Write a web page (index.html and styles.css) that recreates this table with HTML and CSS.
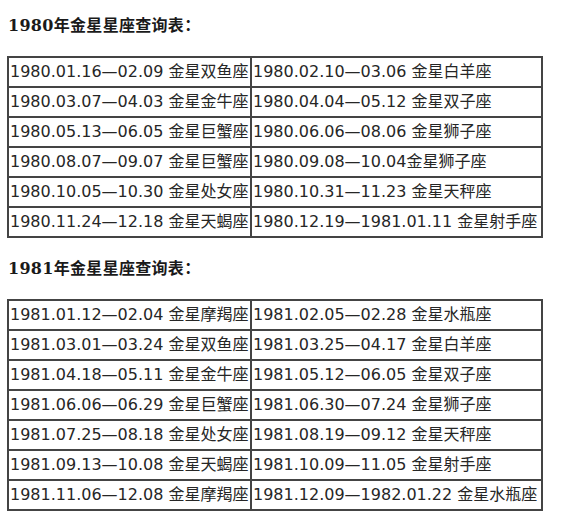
FILE: index.html
```html
<!DOCTYPE html>
<html lang="zh-CN">
<head>
<meta charset="utf-8">
<title>金星星座查询表</title>
<link rel="stylesheet" href="styles.css">
</head>
<body>
<h2 class="title">1980年金星星座查询表：</h2>
<table class="venus">
<colgroup><col class="c1"><col class="c2"></colgroup>
<tr><td>1980.01.16—02.09 金星双鱼座</td><td>1980.02.10—03.06 金星白羊座</td></tr>
<tr><td>1980.03.07—04.03 金星金牛座</td><td>1980.04.04—05.12 金星双子座</td></tr>
<tr><td>1980.05.13—06.05 金星巨蟹座</td><td>1980.06.06—08.06 金星狮子座</td></tr>
<tr><td>1980.08.07—09.07 金星巨蟹座</td><td>1980.09.08—10.04金星狮子座</td></tr>
<tr><td>1980.10.05—10.30 金星处女座</td><td>1980.10.31—11.23 金星天秤座</td></tr>
<tr><td>1980.11.24—12.18 金星天蝎座</td><td>1980.12.19—1981.01.11 金星射手座</td></tr>
</table>
<h2 class="title">1981年金星星座查询表：</h2>
<table class="venus">
<colgroup><col class="c1"><col class="c2"></colgroup>
<tr><td>1981.01.12—02.04 金星摩羯座</td><td>1981.02.05—02.28 金星水瓶座</td></tr>
<tr><td>1981.03.01—03.24 金星双鱼座</td><td>1981.03.25—04.17 金星白羊座</td></tr>
<tr><td>1981.04.18—05.11 金星金牛座</td><td>1981.05.12—06.05 金星双子座</td></tr>
<tr><td>1981.06.06—06.29 金星巨蟹座</td><td>1981.06.30—07.24 金星狮子座</td></tr>
<tr><td>1981.07.25—08.18 金星处女座</td><td>1981.08.19—09.12 金星天秤座</td></tr>
<tr><td>1981.09.13—10.08 金星天蝎座</td><td>1981.10.09—11.05 金星射手座</td></tr>
<tr><td>1981.11.06—12.08 金星摩羯座</td><td>1981.12.09—1982.01.22 金星水瓶座</td></tr>
</table>
</body>
</html>
```
FILE: styles.css
```css
html, body {
  margin: 0;
  background: #ffffff;
}
body {
  padding: 14px 0 0 7px;
  color: #222222;
  font-family: "DejaVu Sans", "Noto Sans CJK SC", sans-serif;
  font-size: 16px;
}
.title {
  margin: 0 0 18px 1px;
  font-family: "DejaVu Serif", "Noto Sans CJK SC", serif;
  font-size: 16px;
  font-weight: bold;
  line-height: 24px;
  letter-spacing: 0.3px;
  color: #1a1a1a;
}
.venus {
  border-collapse: separate;
  border-spacing: 0;
  table-layout: fixed;
  width: 536px;
  border-top: 2px solid #444444;
  border-left: 2px solid #444444;
  margin-bottom: 19px;
}
.venus .c1 { width: 243px; }
.venus .c2 { width: 291px; }
.venus td {
  box-sizing: border-box;
  padding: 0 0 0 1px;
  height: 30px;
  line-height: 28px;
  white-space: nowrap;
  overflow: hidden;
  border-right: 2px solid #444444;
  border-bottom: 2px solid #444444;
  color: #262626;
}
```
